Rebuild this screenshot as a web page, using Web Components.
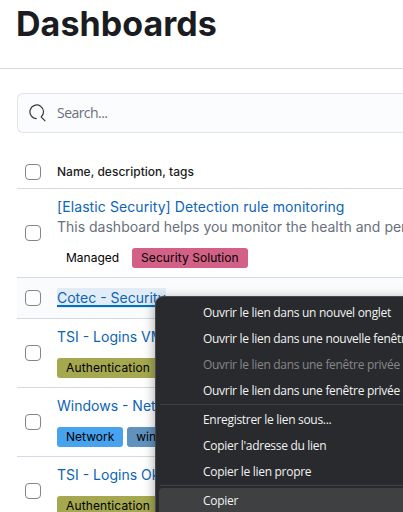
<!DOCTYPE html>
<html lang="fr">
<head>
<meta charset="utf-8">
<title>Dashboards</title>
<style>
html, body { margin: 0; height: 100%; overflow: hidden; background: #fff; }
body { font-family: Inter, "Liberation Sans", sans-serif; color: #1a1c21; }
</style>
</head>
<body>
<dash-page>
  <dash-search>Search...</dash-search>
  <dash-head>Name, description, tags</dash-head>
  <dash-row style="--h:89px">
    <dash-link style="--ls:.09px">[Elastic Security] Detection rule monitoring</dash-link>
    <span slot="desc">This dashboard helps you monitor the health and per</span>
    <dash-tag slot="tags" style="--bg:#fff">Managed</dash-tag>
    <dash-tag slot="tags" style="--bg:#d36086;--ls:.06px">Security Solution</dash-tag>
  </dash-row>
  <dash-row hovered style="--h:41px"><dash-link focused>Cotec - Security</dash-link></dash-row>
  <dash-row style="--h:69px">
    <dash-link>TSI - Logins VMware</dash-link>
    <dash-tag slot="tags" style="--bg:#a5a84f;--ls:.13px">Authentication</dash-tag>
  </dash-row>
  <dash-row style="--h:69px">
    <dash-link>Windows - Network</dash-link>
    <dash-tag slot="tags" style="--bg:#47a3ee">Network</dash-tag>
    <dash-tag slot="tags" style="--bg:#6092c0">windows</dash-tag>
  </dash-row>
  <dash-row style="--h:69px">
    <dash-link>TSI - Logins Okta</dash-link>
    <dash-tag slot="tags" style="--bg:#a5a84f;--ls:.13px">Authentication</dash-tag>
  </dash-row>
</dash-page>
<context-menu>
  <menu-item>Ouvrir le lien dans un nouvel onglet</menu-item>
  <menu-item>Ouvrir le lien dans une nouvelle fenêtre</menu-item>
  <menu-item disabled>Ouvrir le lien dans une fenêtre privée</menu-item>
  <menu-item>Ouvrir le lien dans une fenêtre privée avec Tor</menu-item>
  <menu-line></menu-line>
  <menu-item>Enregistrer le lien sous...</menu-item>
  <menu-item>Copier l'adresse du lien</menu-item>
  <menu-item>Copier le lien propre</menu-item>
  <menu-line></menu-line>
  <menu-item active>Copier</menu-item>
</context-menu>
<script>
function define(name, html) {
  const template = document.createElement('template');
  template.innerHTML = html;
  customElements.define(name, class extends HTMLElement {
    constructor() {
      super();
      this.attachShadow({ mode: 'open' }).append(template.content.cloneNode(true));
    }
  });
}

define('dash-check', `<style>
:host { display: block; flex: none; box-sizing: border-box; width: 16px; height: 16px; border: 1px solid #858585; border-radius: 4px; background: #fff; }
</style>`);

define('dash-page', `<style>
:host { display: block; height: 512px; overflow: hidden; }
header { height: 68px; border-bottom: 1px solid #d3dae6; padding-left: 16px; }
h1 { margin: 0; font-size: 34px; line-height: 48px; font-weight: 700; letter-spacing: .06px; }
main { padding: 24px 0 0 17px; }
</style><header><h1>Dashboards</h1></header><main><slot></slot></main>`);

define('dash-search', `<style>
:host { display: flex; align-items: center; gap: 10px; box-sizing: border-box; height: 40px; padding-left: 11px; border: 1px solid #e0e3ee; border-right: 0; border-radius: 6px 0 0 6px; background: #fbfcfe; color: #69707d; font: 14px/20px "Open Sans", "Noto Sans", sans-serif; }
svg { flex: none; margin-top: -1px; }
span { letter-spacing: -.55px; }
</style><svg width="18" height="18" viewBox="0 0 18 18" fill="none" stroke="#343741" stroke-width="1.2"><path d="M7.7 14.6A6.8 6.8 0 1 1 12 13.1M11.8 12.6L16.3 17.2"/></svg><span><slot></slot></span>`);

define('dash-head', `<style>
:host { display: flex; align-items: center; gap: 16px; box-sizing: border-box; height: 56px; padding: 22px 0 0 8px; border-bottom: 1px solid #d3dae6; font-size: 12px; line-height: 18px; font-weight: 500; letter-spacing: .02px; }
</style><dash-check></dash-check><span><slot></slot></span>`);

define('dash-row', `<style>
:host { display: flex; align-items: center; gap: 16px; box-sizing: border-box; height: var(--h); padding-left: 8px; border-bottom: 1px solid #d3dae6; font-size: 14px; white-space: nowrap; }
:host([hovered]) { background: #fafbfd; }
.desc { color: #69707d; line-height: 20px; }
.tags { display: flex; gap: 4px; }
::slotted(dash-tag) { margin: 11px 0 2px; }
</style><dash-check></dash-check><div><slot></slot><div class="desc"><slot name="desc"></slot></div><div class="tags"><slot name="tags"></slot></div></div>`);

define('dash-link', `<style>
:host { display: block; width: max-content; height: 20px; line-height: 20px; color: #0b64b8; letter-spacing: var(--ls, 0); }
:host([focused]) { box-sizing: border-box; background: #e1ecf7; text-decoration: underline 2px #0071c2; text-underline-offset: 2px; text-decoration-skip-ink: none; }
</style><slot></slot>`);

define('dash-tag', `<style>
:host { display: block; height: 20px; padding: 0 9px; border-radius: 3px; background: var(--bg); color: #000; font-size: 12px; line-height: 20px; letter-spacing: var(--ls, 0); }
</style><slot></slot>`);

define('context-menu', `<style>
:host { position: absolute; left: 155px; top: 296px; width: 300px; height: 300px; box-sizing: border-box; padding: 3px; border: 1px solid #494a4c; border-radius: 8px; background: #292a2d; box-shadow: 0 3px 12px rgba(0,0,0,.38); color: #f2f2f2; }
</style><slot></slot>`);

define('menu-item', `<style>
:host { display: block; height: 26px; box-sizing: border-box; padding-left: 44px; border-radius: 4px; font: 12px/26px "Open Sans", "Noto Sans", sans-serif; letter-spacing: -.3px; white-space: nowrap; }
:host([disabled]) { color: #85878a; }
:host([active]) { background: #3f4042; }
</style><slot></slot>`);

define('menu-line', `<style>
:host { display: block; height: 1px; margin: 0 1px 2px; background: #414245; }
</style>`);
</script>
</body>
</html>
